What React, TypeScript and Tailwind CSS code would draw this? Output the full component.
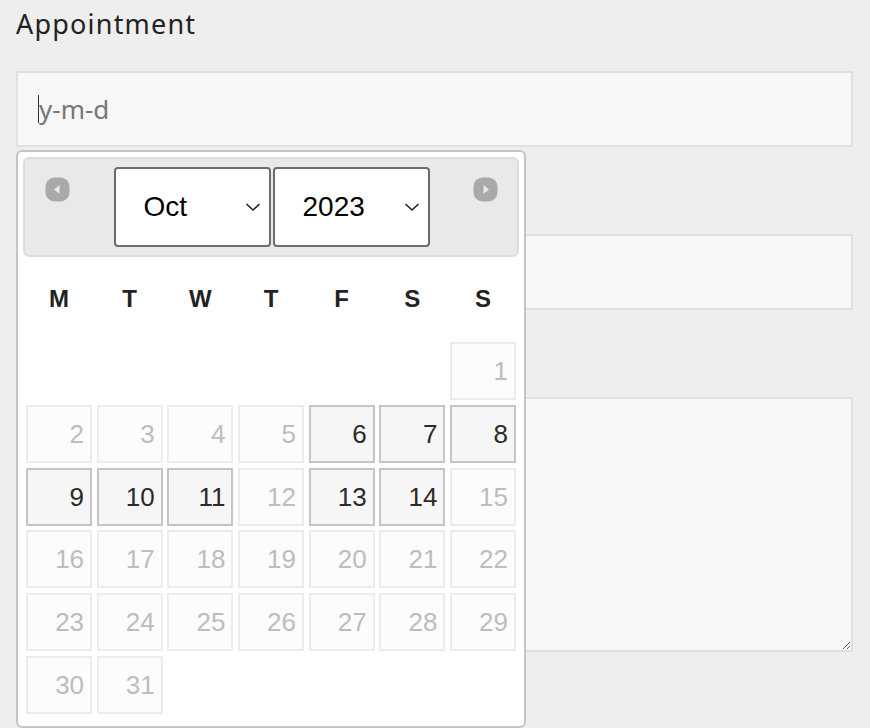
import React from 'react';

const weekDays = ['M', 'T', 'W', 'T', 'F', 'S', 'S'];
const enabledDays = [6, 7, 8, 9, 10, 11, 13, 14];

const NavIcon = ({ dir }: { dir: 'prev' | 'next' }) => (
  <svg width="25" height="25" viewBox="0 0 25 25">
    <rect x="0.5" y="0.5" width="24" height="24" rx="9" fill="#a9a9a9" />
    {dir === 'prev' ? (
      <path d="M9 12.5 L14.5 8 L14.5 17 Z" fill="#e8e8e8" />
    ) : (
      <path d="M16 12.5 L10.5 8 L10.5 17 Z" fill="#e8e8e8" />
    )}
  </svg>
);

const Chevron = () => (
  <svg width="16" height="10" viewBox="0 0 16 10" fill="none">
    <path d="M1.5 2 L8 8 L14.5 2" stroke="#222" strokeWidth="1.6" />
  </svg>
);

const FakeSelect = ({ value }: { value: string }) => (
  <div className="w-[157px] h-[80px] bg-white border-2 border-[#6d6d6d] rounded-[4px] flex items-center justify-between pl-[28px] pr-[8px]">
    <span className="text-[28px] text-black font-['Liberation_Sans',Arial,sans-serif]">{value}</span>
    <Chevron />
  </div>
);

const DayCell = ({ day }: { day: number }) => {
  const active = enabledDays.includes(day);
  return (
    <div
      className={
        active
          ? "h-[58px] border-2 border-[#c5c5c5] bg-[#f6f6f6] text-[#2a2a2a] text-right pr-[6px] leading-[54px] text-[26px] font-['Liberation_Sans',Arial,sans-serif]"
          : "h-[58px] border-2 border-[#ececec] bg-[#fcfcfc] text-[#bdbdbd] text-right pr-[6px] leading-[54px] text-[26px] font-['Liberation_Sans',Arial,sans-serif]"
      }
    >
      {day}
    </div>
  );
};

const DatePicker = () => {
  const days = Array.from({ length: 31 }, (_, i) => i + 1);
  return (
    <div className="absolute left-[16px] top-[150px] w-[510px] h-[578px] bg-white border-2 border-[#c5c5c5] rounded-[6px] p-[5px] font-['Liberation_Sans',Arial,sans-serif]">
      <div className="h-[100px] bg-[#e9e9e9] border-2 border-[#dddddd] rounded-[6px] flex items-start justify-between pl-[20px] pr-[19px] pt-[8px]">
        <div className="mt-[10px]">
          <NavIcon dir="prev" />
        </div>
        <div className="flex gap-[2px]">
          <FakeSelect value="Oct" />
          <FakeSelect value="2023" />
        </div>
        <div className="mt-[10px]">
          <NavIcon dir="next" />
        </div>
      </div>

      <div className="px-[3px]">
        <div className="grid grid-cols-7 gap-x-[4.6px] mt-[27px] h-[30px]">
          {weekDays.map((d, i) => (
            <div key={i} className="text-center text-[24px] font-bold leading-[30px] text-[#222]">
              {d}
            </div>
          ))}
        </div>
        <div className="grid grid-cols-7 gap-x-[4.6px] gap-y-[4.8px] mt-[28px]">
          {Array.from({ length: 6 }).map((_, i) => (
            <div key={'e' + i} />
          ))}
          {days.map((d) => (
            <DayCell key={d} day={d} />
          ))}
        </div>
      </div>
    </div>
  );
};

const App = () => {
  return (
    <div className="relative w-[870px] h-[728px] overflow-hidden bg-[#eeeeee] font-['Noto_Sans',sans-serif]">
      <div className="pl-[16px] pr-[17px] pt-[5px]">
        <label className="block text-[27px] tracking-[1.2px] text-[#222] leading-[38px]">Appointment</label>
        <div className="mt-[28px] h-[76px] bg-[#f7f7f7] border-2 border-[#e0e0e0] flex items-center pl-[20px]">
          <span className="w-[1px] h-[28px] bg-[#333]" />
          <span className="text-[26px] text-[#777]">y-m-d</span>
        </div>
        <div className="mt-[87px] h-[76px] bg-[#f7f7f7] border-2 border-[#e0e0e0]" />
        <textarea className="mt-[87px] block w-full h-[255px] bg-[#f7f7f7] border-2 border-[#e0e0e0] outline-none" />
      </div>
      <DatePicker />
    </div>
  );
};

export default App;
